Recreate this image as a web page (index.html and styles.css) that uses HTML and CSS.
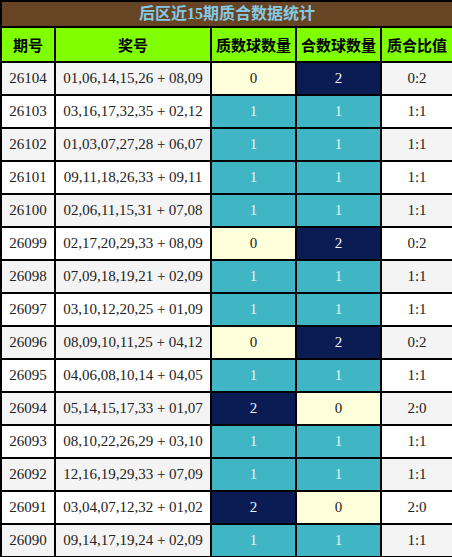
FILE: index.html
```html
<!DOCTYPE html>
<html lang="zh">
    <head>
        <meta charset="UTF-8" />
        <meta name="viewport" content="width=device-width, initial-scale=1.0" />
        <title>后区近15期质合数据统计</title>
        <link rel="stylesheet" href="styles.css">
    </head>
    <body>
        <table class="stat-table">
            <colgroup>
                <col class="col-issue" />
                <col class="col-nums" />
                <col class="col-prime" />
                <col class="col-comp" />
                <col class="col-ratio" />
            </colgroup>
            <thead>
                <tr class="title-row">
                    <th colspan="5">后区近15期质合数据统计</th>
                </tr>
                <tr class="head-row">
                    <th>期号</th>
                    <th>奖号</th>
                    <th>质数球数量</th>
                    <th>合数球数量</th>
                    <th>质合比值</th>
                </tr>
            </thead>
            <tbody>
                <tr>
                    <td>26104</td>
                    <td>01,06,14,15,26 + 08,09</td>
                    <td class="c-zero">0</td>
                    <td class="c-two">2</td>
                    <td>0:2</td>
                </tr>
                <tr>
                    <td>26103</td>
                    <td>03,16,17,32,35 + 02,12</td>
                    <td class="c-one">1</td>
                    <td class="c-one">1</td>
                    <td>1:1</td>
                </tr>
                <tr>
                    <td>26102</td>
                    <td>01,03,07,27,28 + 06,07</td>
                    <td class="c-one">1</td>
                    <td class="c-one">1</td>
                    <td>1:1</td>
                </tr>
                <tr>
                    <td>26101</td>
                    <td>09,11,18,26,33 + 09,11</td>
                    <td class="c-one">1</td>
                    <td class="c-one">1</td>
                    <td>1:1</td>
                </tr>
                <tr>
                    <td>26100</td>
                    <td>02,06,11,15,31 + 07,08</td>
                    <td class="c-one">1</td>
                    <td class="c-one">1</td>
                    <td>1:1</td>
                </tr>
                <tr>
                    <td>26099</td>
                    <td>02,17,20,29,33 + 08,09</td>
                    <td class="c-zero">0</td>
                    <td class="c-two">2</td>
                    <td>0:2</td>
                </tr>
                <tr>
                    <td>26098</td>
                    <td>07,09,18,19,21 + 02,09</td>
                    <td class="c-one">1</td>
                    <td class="c-one">1</td>
                    <td>1:1</td>
                </tr>
                <tr>
                    <td>26097</td>
                    <td>03,10,12,20,25 + 01,09</td>
                    <td class="c-one">1</td>
                    <td class="c-one">1</td>
                    <td>1:1</td>
                </tr>
                <tr>
                    <td>26096</td>
                    <td>08,09,10,11,25 + 04,12</td>
                    <td class="c-zero">0</td>
                    <td class="c-two">2</td>
                    <td>0:2</td>
                </tr>
                <tr>
                    <td>26095</td>
                    <td>04,06,08,10,14 + 04,05</td>
                    <td class="c-one">1</td>
                    <td class="c-one">1</td>
                    <td>1:1</td>
                </tr>
                <tr>
                    <td>26094</td>
                    <td>05,14,15,17,33 + 01,07</td>
                    <td class="c-two">2</td>
                    <td class="c-zero">0</td>
                    <td>2:0</td>
                </tr>
                <tr>
                    <td>26093</td>
                    <td>08,10,22,26,29 + 03,10</td>
                    <td class="c-one">1</td>
                    <td class="c-one">1</td>
                    <td>1:1</td>
                </tr>
                <tr>
                    <td>26092</td>
                    <td>12,16,19,29,33 + 07,09</td>
                    <td class="c-one">1</td>
                    <td class="c-one">1</td>
                    <td>1:1</td>
                </tr>
                <tr>
                    <td>26091</td>
                    <td>03,04,07,12,32 + 01,02</td>
                    <td class="c-two">2</td>
                    <td class="c-zero">0</td>
                    <td>2:0</td>
                </tr>
                <tr>
                    <td>26090</td>
                    <td>09,14,17,19,24 + 02,09</td>
                    <td class="c-one">1</td>
                    <td class="c-one">1</td>
                    <td>1:1</td>
                </tr>
            </tbody>
        </table>
    </body>
</html>
```

FILE: styles.css
```css
body {
    margin: 0;
    background: #fff;
}

.stat-table {
    width: 452px;
    border-collapse: collapse;
    table-layout: fixed;
    font-family: "Liberation Serif", "Noto Sans CJK SC", serif;
    font-size: 15px;
    color: #222;
}

.stat-table th,
.stat-table td {
    border: 2px solid #000;
    padding: 0;
    text-align: center;
    white-space: nowrap;
}

.col-issue { width: 54px; }
.col-nums { width: 156px; }
.col-prime { width: 85px; }
.col-comp { width: 85px; }
.col-ratio { width: 72px; }

/* 标题 */
.title-row th {
    height: 24px;
    background-color: #674423;
    color: #86c9e6;
    font-family: "Liberation Serif", "Noto Sans CJK SC", serif;
    font-size: 16px;
    font-weight: bold;
    line-height: 22px;
}

/* 表头 */
.head-row th {
    height: 33px;
    background-color: #7fff00;
    color: #000;
    font-family: "Noto Sans CJK SC", sans-serif;
    font-size: 15px;
    font-weight: bold;
}

.stat-table td {
    height: 31px;
}

.stat-table tbody tr:nth-child(odd) {
    background-color: #f4f4f4;
}

.stat-table tbody tr:nth-child(even) {
    background-color: #fff;
}

.c-one {
    background-color: #40b5c4;
    color: #e6f2f4;
}

.c-zero {
    background-color: #ffffdc;
}

.c-two {
    background-color: #0b1c55;
    color: #f2f2f2;
}
```
